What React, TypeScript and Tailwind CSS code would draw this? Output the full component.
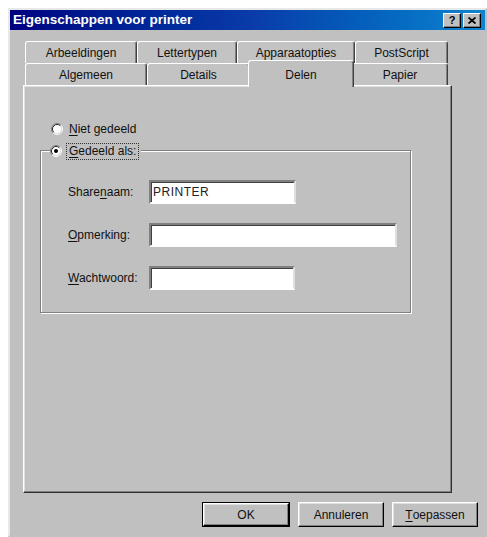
import React from 'react';

const FONT = "font-['Liberation_Sans',Arial,sans-serif]";

function Radio({ checked }: { checked?: boolean }) {
  return (
    <svg width="12" height="12" viewBox="0 0 12 12" className="shrink-0">
      <circle cx="6" cy="6" r="4.5" fill="#ffffff" />
      <path d="M2.11 9.89 A5.5 5.5 0 0 1 9.89 2.11" fill="none" stroke="#808080" strokeWidth="1" />
      <path d="M9.89 2.11 A5.5 5.5 0 0 1 2.11 9.89" fill="none" stroke="#ffffff" strokeWidth="1" />
      <path d="M2.82 9.18 A4.5 4.5 0 0 1 9.18 2.82" fill="none" stroke="#303030" strokeWidth="1" />
      <path d="M9.18 2.82 A4.5 4.5 0 0 1 2.82 9.18" fill="none" stroke="#dfdfdf" strokeWidth="1" />
      {checked && <circle cx="6" cy="6" r="2" fill="#000000" />}
    </svg>
  );
}

function Tab({ label, w, selected }: { label: string; w: string; selected?: boolean }) {
  if (selected) {
    return (
      <div
        className={`relative z-10 -mx-[2px] -mt-[3px] flex h-[27px] ${w} shrink-0 items-start justify-center rounded-t-[3px] border-l border-t border-r border-l-white border-t-white border-r-[#404040] bg-[#c0c0c0] pt-[5px] text-[12px] text-[#111] shadow-[inset_-1px_0_0_#808080]`}
      >
        {label}
      </div>
    );
  }
  return (
    <div
      className={`flex h-full ${w} shrink-0 items-center justify-center rounded-t-[3px] border-l border-t border-r border-l-white border-t-white border-r-[#404040] bg-[#c3c3c3] pt-[1px] text-[12px] text-[#111] shadow-[inset_-1px_0_0_#808080]`}
    >
      {label}
    </div>
  );
}

function Field({ label, ul, rest, w }: { label: string; ul: number; rest?: string; w: string }) {
  const before = label.slice(0, ul);
  const u = label.slice(ul, ul + 1);
  const after = label.slice(ul + 1);
  return (
    <div className="flex items-center">
      <span className="w-[81px] shrink-0 text-[12px] text-[#111]">
        {before}
        <span className="underline underline-offset-2">{u}</span>
        {after}
      </span>
      <div
        className={`flex h-[24px] ${w} items-center border-2 border-t-[#808080] border-l-[#808080] border-b-white border-r-[#dfdfdf] bg-white pl-[2px] text-[12px] tracking-[0.5px] text-[#222] shadow-[inset_1px_1px_0_#404040]`}
      >
        {rest}
      </div>
    </div>
  );
}

function Button({ children, w, isDefault }: { children: React.ReactNode; w: string; isDefault?: boolean }) {
  return (
    <div className={`h-[25px] ${w} ${isDefault ? 'border border-black' : ''}`}>
      <div className="flex h-full w-full items-center justify-center border border-t-white border-l-white border-b-[#000] border-r-[#000] bg-[#c0c0c0] text-[12px] text-[#111] shadow-[inset_-1px_-1px_0_#808080,inset_1px_1px_0_#dfdfdf]">
        {children}
      </div>
    </div>
  );
}

export default function App() {
  return (
    <div className={`flex h-[537px] w-[487px] bg-white pl-[8px] pt-[8px] ${FONT}`}>
      <div className="flex h-[529px] w-[479px] flex-col border-2 border-t-[#e8e8e8] border-l-[#e8e8e8] border-r-[#c0c0c0] border-b-[#c0c0c0] bg-[#c0c0c0]">
        {/* Title bar */}
        <div className="flex h-[20px] items-center justify-between bg-gradient-to-r from-[#000080] via-[#0a3aa8] to-[#1084d0] pl-[3px] pr-[4px]">
          <span className="text-[13.5px] font-bold leading-none text-white">Eigenschappen voor printer</span>
          <div className="flex gap-[2px]">
            <div className="flex h-[15px] w-[18px] items-center justify-center border border-t-white border-l-white border-b-black border-r-black bg-[#c0c0c0] text-[11px] font-bold leading-none text-black shadow-[inset_-1px_-1px_0_#808080]">
              ?
            </div>
            <div className="flex h-[15px] w-[18px] items-center justify-center border border-t-white border-l-white border-b-black border-r-black bg-[#c0c0c0] shadow-[inset_-1px_-1px_0_#808080]">
              <svg width="8" height="7" viewBox="0 0 8 7">
                <path d="M0.5 0.5 L7.5 6.5 M7.5 0.5 L0.5 6.5" stroke="#000" strokeWidth="1.8" />
              </svg>
            </div>
          </div>
        </div>

        {/* Body */}
        <div className="flex flex-col pl-[13px] pt-[11px]">
          {/* Tabs */}
          <div className="ml-[2px] flex flex-col">
            <div className="flex h-[22px]">
              <Tab label="Arbeeldingen" w="w-[112px]" />
              <Tab label="Lettertypen" w="w-[100px]" />
              <Tab label="Apparaatopties" w="w-[118px]" />
              <Tab label="PostScript" w="w-[93px]" />
            </div>
            <div className="flex h-[22px]">
              <Tab label="Algemeen" w="w-[122px]" />
              <Tab label="Details" w="w-[103px]" />
              <Tab label="Delen" w="w-[106px]" selected />
              <Tab label="Papier" w="w-[96px]" />
            </div>
          </div>

          {/* Panel */}
          <div className="flex h-[408px] w-[429px] flex-col border border-t-white border-l-white border-r-[#303030] border-b-[#303030] bg-[#c0c0c0] pt-[35px] shadow-[inset_-1px_-1px_0_#808080,inset_1px_1px_0_#dfdfdf]">
            <div className="flex h-[16px] items-center pl-[27px]">
              <Radio />
              <span className="ml-[6px] text-[12px] text-[#111]">
                <span className="underline underline-offset-2">N</span>iet gedeeld
              </span>
            </div>

            {/* Group box */}
            <div className="ml-[16px] mt-[13px] flex h-[163px] w-[371px] flex-col border border-[#808080] shadow-[inset_1px_1px_0_#ffffff,1px_1px_0_#ffffff]">
              <div className="-mt-[9px] ml-[9px] flex h-[18px] items-center self-start bg-[#c0c0c0] pr-[2px]">
                <Radio checked />
                <span className="ml-[4px] border border-dotted border-[#333] px-[2px] text-[12px] leading-[15px] text-[#111]">
                  <span className="underline underline-offset-2">G</span>edeeld als:
                </span>
              </div>
              <div className="mt-[20px] flex flex-col gap-[19px] pl-[27px]">
                <Field label="Sharenaam:" ul={5} rest="PRINTER" w="w-[147px]" />
                <Field label="Opmerking:" ul={0} w="w-[248px]" />
                <Field label="Wachtwoord:" ul={0} w="w-[146px]" />
              </div>
            </div>
          </div>

          {/* Buttons */}
          <div className="mt-[9px] flex gap-[8px] pl-[179px]">
            <Button w="w-[88px]" isDefault>
              OK
            </Button>
            <Button w="w-[86px]">Annuleren</Button>
            <Button w="w-[86px]">
              <span className="underline underline-offset-2">T</span>oepassen
            </Button>
          </div>
        </div>
      </div>
    </div>
  );
}
